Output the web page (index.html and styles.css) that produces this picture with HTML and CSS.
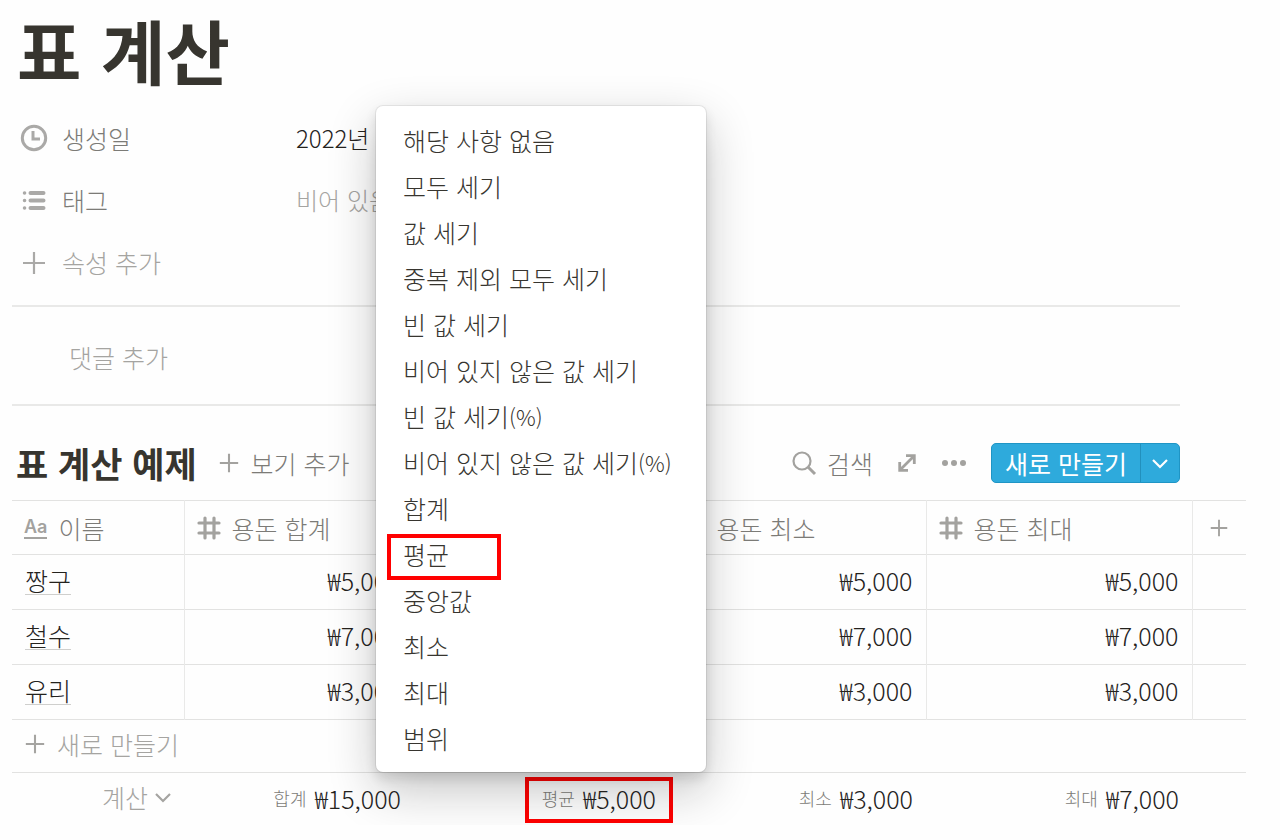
FILE: index.html
```html
<!DOCTYPE html>
<html lang="ko">

<head>
	<meta charset="utf-8">
	<meta name="viewport" content="width=device-width, initial-scale=1">
	<title>표 계산</title>
	<link rel="stylesheet" href="styles.css">
</head>

<body>
	<svg class="sprite" aria-hidden="true">
		<symbol id="plus" viewBox="0 0 24 24"><path d="M12 1v22M1 12h22" fill="none" stroke="currentColor" stroke-width="2.500"/></symbol>
		<symbol id="chevron" viewBox="0 0 16 16"><path d="M1 5l7 7 7-7" fill="none" stroke="currentColor" stroke-width="2.200"/></symbol>
		<symbol id="hash" viewBox="0 0 24 24"><path d="M8 2v20M17 2v20M2 7h20M2 17h20" fill="none" stroke="currentColor" stroke-width="3.200" stroke-linecap="round"/></symbol>
	</svg>
	<main class="page">
		<h1 class="title">표 계산</h1>
		<div class="props">
			<div class="prop">
				<svg class="prop-icon" viewBox="0 0 28 28"><circle cx="14" cy="14" r="11.7" fill="none" stroke="currentColor" stroke-width="3"/><path d="M13 7v8h7" fill="none" stroke="currentColor" stroke-width="3"/></svg>
				<span class="prop-name">생성일</span>
				<span class="prop-value">2022년 1월</span>
			</div>
			<div class="prop">
				<svg class="prop-icon" viewBox="0 0 28 28"><path d="M10.500 7h13M10.500 14.500h13M10.500 22h13" stroke="currentColor" stroke-width="4" stroke-linecap="round"/><path d="M4.500 7h.1M4.500 14.500h.1M4.500 22h.1" stroke="currentColor" stroke-width="3.500" stroke-linecap="round"/></svg>
				<span class="prop-name">태그</span>
				<span class="prop-value empty">비어 있음</span>
			</div>
			<button type="button" class="prop add">
				<svg class="prop-icon" viewBox="0 0 28 28"><path d="M14 4v22M3 15h22" stroke="currentColor" stroke-width="2.200"/></svg>
				<span class="prop-name">속성 추가</span>
			</button>
		</div>
		<button type="button" class="comment">댓글 추가</button>

		<div class="toolbar">
			<h2 class="view-title">표 계산 예제</h2>
			<button type="button" class="tool add-view"><svg class="icon"><use href="#plus"/></svg>보기 추가</button>
			<button type="button" class="tool search"><svg class="icon-search" viewBox="0 0 26 26"><circle cx="11" cy="11" r="8.500" fill="none" stroke="currentColor" stroke-width="2.200"/><path d="M17 17l7 7" stroke="currentColor" stroke-width="3"/></svg>검색</button>
			<button type="button" class="tool" aria-label="전체 페이지로 열기"><svg class="icon" viewBox="0 0 20 20"><path d="M3.500 16.500L16.500 3.500M9 2.700h8.300V11M2.700 9v8.300H11" fill="none" stroke="currentColor" stroke-width="2.800"/></svg></button>
			<button type="button" class="tool" aria-label="더 보기"><svg class="icon-more" viewBox="0 0 26 8"><circle cx="4" cy="4" r="3" fill="currentColor"/><circle cx="13" cy="4" r="3" fill="currentColor"/><circle cx="22" cy="4" r="3" fill="currentColor"/></svg></button>
			<div class="new">
				<button type="button" class="new-main">새로 만들기</button>
				<button type="button" class="new-more" aria-label="템플릿"><svg class="icon-chevron"><use href="#chevron"/></svg></button>
			</div>
		</div>

		<table class="db">
			<colgroup>
				<col class="c-name"><col class="c-sum"><col class="c-avg"><col class="c-min"><col class="c-max"><col class="c-add">
			</colgroup>
			<thead>
				<tr>
					<th><span class="head"><span class="aa">Aa</span>이름</span></th>
					<th><span class="head"><svg class="icon-hash"><use href="#hash"/></svg>용돈 합계</span></th>
					<th><span class="head"><svg class="icon-hash"><use href="#hash"/></svg>용돈 평균</span></th>
					<th><span class="head"><svg class="icon-hash"><use href="#hash"/></svg>용돈 최소</span></th>
					<th><span class="head"><svg class="icon-hash"><use href="#hash"/></svg>용돈 최대</span></th>
					<th><button type="button" class="add-col" aria-label="속성 추가"><svg class="icon-plus"><use href="#plus"/></svg></button></th>
				</tr>
			</thead>
			<tbody>
				<tr><td><a href="#" class="name">짱구</a></td><td>₩5,000</td><td>₩5,000</td><td>₩5,000</td><td>₩5,000</td><td></td></tr>
				<tr><td><a href="#" class="name">철수</a></td><td>₩7,000</td><td>₩7,000</td><td>₩7,000</td><td>₩7,000</td><td></td></tr>
				<tr><td><a href="#" class="name">유리</a></td><td>₩3,000</td><td>₩3,000</td><td>₩3,000</td><td>₩3,000</td><td></td></tr>
				<tr class="new-row"><td colspan="6"><button type="button" class="add-row"><svg class="icon"><use href="#plus"/></svg>새로 만들기</button></td></tr>
			</tbody>
			<tfoot>
				<tr>
					<td><button type="button" class="calc">계산<svg class="icon-chevron"><use href="#chevron"/></svg></button></td>
					<td><span class="result"><small>합계</small>₩15,000</span></td>
					<td><span class="result marked"><small>평균</small>₩5,000</span></td>
					<td><span class="result"><small>최소</small>₩3,000</span></td>
					<td><span class="result"><small>최대</small>₩7,000</span></td>
					<td></td>
				</tr>
			</tfoot>
		</table>

		<div class="menu" role="menu">
			<button type="button" role="menuitem">해당 사항 없음</button>
			<button type="button" role="menuitem">모두 세기</button>
			<button type="button" role="menuitem">값 세기</button>
			<button type="button" role="menuitem">중복 제외 모두 세기</button>
			<button type="button" role="menuitem">빈 값 세기</button>
			<button type="button" role="menuitem">비어 있지 않은 값 세기</button>
			<button type="button" role="menuitem">빈 값 세기<span class="pct">(%)</span></button>
			<button type="button" role="menuitem">비어 있지 않은 값 세기<span class="pct">(%)</span></button>
			<button type="button" role="menuitem">합계</button>
			<button type="button" role="menuitem" class="marked">평균</button>
			<button type="button" role="menuitem">중앙값</button>
			<button type="button" role="menuitem">최소</button>
			<button type="button" role="menuitem">최대</button>
			<button type="button" role="menuitem">범위</button>
		</div>
	</main>
</body>

</html>
```
FILE: styles.css
```css
*,
*::after {
	box-sizing: border-box;
}

body {
	margin: 0;
	background: #fefefe;
	color: #37352f;
	font-family: "Noto Sans CJK KR", sans-serif;
	font-size: 25px;
	font-weight: 300;
	line-height: 36px;
}

button {
	display: flex;
	align-items: center;
	margin: 0;
	padding: 0;
	border: 0;
	background: none;
	color: inherit;
	font: inherit;
	text-align: left;
	white-space: nowrap;
	cursor: pointer;
}

svg {
	flex: none;
}

.sprite {
	position: absolute;
	width: 0;
	height: 0;
}

.page {
	position: relative;
	padding: 0 34px 0 12px;
}

.title {
	margin: 0;
	padding: 4px 5px;
	font-size: 70px;
	font-weight: 700;
	line-height: 92px;
}

/* properties */
.props {
	margin-right: 66px;
	padding: 7px 0 12px 8px;
	border-bottom: 2px solid #e9e9e8;
}

.prop {
	display: flex;
	align-items: center;
	height: 62px;
}

.prop-icon {
	width: 28px;
	height: 28px;
	margin-right: 14px;
	color: #aaa9a7;
}

.prop-name {
	width: 234px;
	color: #7c7b77;
}

.prop-value {
	color: #24221d;
	font-size: 24px;
	line-height: 34px;
	white-space: nowrap;
}

.empty,
.add .prop-name {
	color: #a5a4a1;
}

.comment {
	width: calc(100% - 66px);
	height: 99px;
	padding: 2px 0 0 57px;
	border-bottom: 2px solid #e9e9e8;
	color: #a5a4a1;
}

/* view toolbar */
.toolbar {
	display: flex;
	align-items: center;
	height: 94px;
	margin-right: 66px;
	padding: 20px 0 0 4px;
}

.view-title {
	margin: 0 22px 0 0;
	font-size: 35px;
	font-weight: 700;
	white-space: nowrap;
}

.tool {
	margin-right: 24px;
	color: #7c7b77;
}

.tool svg {
	color: #a3a29f;
}

.icon {
	width: 20px;
	height: 20px;
}

.add-view .icon,
.add-row .icon {
	margin-right: 12px;
}

.search {
	margin-left: auto;
}

.icon-search {
	width: 26px;
	height: 26px;
	margin-right: 10px;
}

.icon-more {
	width: 26px;
	height: 8px;
}

.icon-chevron {
	width: 16px;
	height: 16px;
}

.new {
	display: flex;
	height: 40px;
	border: 1px solid #1f95c5;
	border-radius: 5px;
	background: #2eaadc;
	color: #fff;
	font-weight: 400;
}

.new-main {
	padding: 0 13px;
	border-right: 1px solid #2290bd;
}

.new-more {
	justify-content: center;
	width: 38px;
}

/* table */
.db {
	width: 100%;
	border-collapse: collapse;
	table-layout: fixed;
}

.c-name { width: 172px; }
.c-sum { width: 230px; }
.c-avg { width: 255px; }
.c-min { width: 257px; }
.c-max { width: 266px; }
.c-add { width: 54px; }

.db th,
.db td {
	height: 55px;
	padding: 0 13px 4px;
	border-right: 1px solid #e9e9e8;
	font-weight: 300;
}

.db th {
	height: 54px;
	padding: 0 12px;
}

.db td {
	color: #24221d;
	text-align: right;
}

.db tr {
	border-top: 1px solid #e2e2e1;
	border-bottom: 1px solid #e2e2e1;
}

.db th:last-child,
.db td:last-child,
.db tfoot td {
	border-right: 0;
}

.db td:first-child {
	text-align: left;
}

.head {
	display: flex;
	align-items: center;
	color: #7c7b77;
	white-space: nowrap;
}

.aa {
	margin-right: 11px;
	border-bottom: 2px solid #a3a29f;
	color: #a3a29f;
	font-family: Inter, sans-serif;
	font-size: 18px;
	font-weight: 600;
	line-height: 20px;
}

.icon-hash {
	width: 24px;
	height: 24px;
	margin-right: 11px;
	color: #a3a29f;
}

.icon-plus {
	width: 18px;
	height: 18px;
	color: #a3a29f;
}

.add-col {
	width: 100%;
	justify-content: center;
}

.name {
	display: inline-block;
	border-bottom: 1px solid #cfcfcd;
	color: inherit;
	line-height: 28px;
	text-decoration: none;
}

.add-row,
.calc {
	color: #a5a4a1;
}

.db .new-row td {
	height: 53px;
}

.db tfoot tr {
	border-bottom: 0;
}

.db tfoot td {
	height: 52px;
}

.calc {
	gap: 7px;
	margin-left: auto;
}

.result {
	display: inline-flex;
	align-items: center;
	gap: 8px;
}

.result small {
	color: #7c7b77;
	font-size: 18px;
}

/* aggregation menu */
.menu {
	position: absolute;
	top: 106px;
	left: 376px;
	z-index: 1;
	width: 330px;
	padding: 11px 0;
	border-radius: 7px;
	background: #fff;
	box-shadow: 0 0 0 1px rgba(15, 15, 15, .07), 0 6px 12px rgba(15, 15, 15, .12), 0 18px 48px rgba(15, 15, 15, .24);
}

.menu button {
	width: 100%;
	height: 46px;
	padding: 0 27px;
}

.pct {
	font-size: 22px;
}

.marked {
	position: relative;
}

.marked::after {
	content: "";
	position: absolute;
	border: 4px solid #f00;
}

.menu .marked::after {
	top: 3px;
	left: 11px;
	width: 114px;
	height: 46px;
}

.result.marked::after {
	inset: -3px -17px -7px;
}
```
